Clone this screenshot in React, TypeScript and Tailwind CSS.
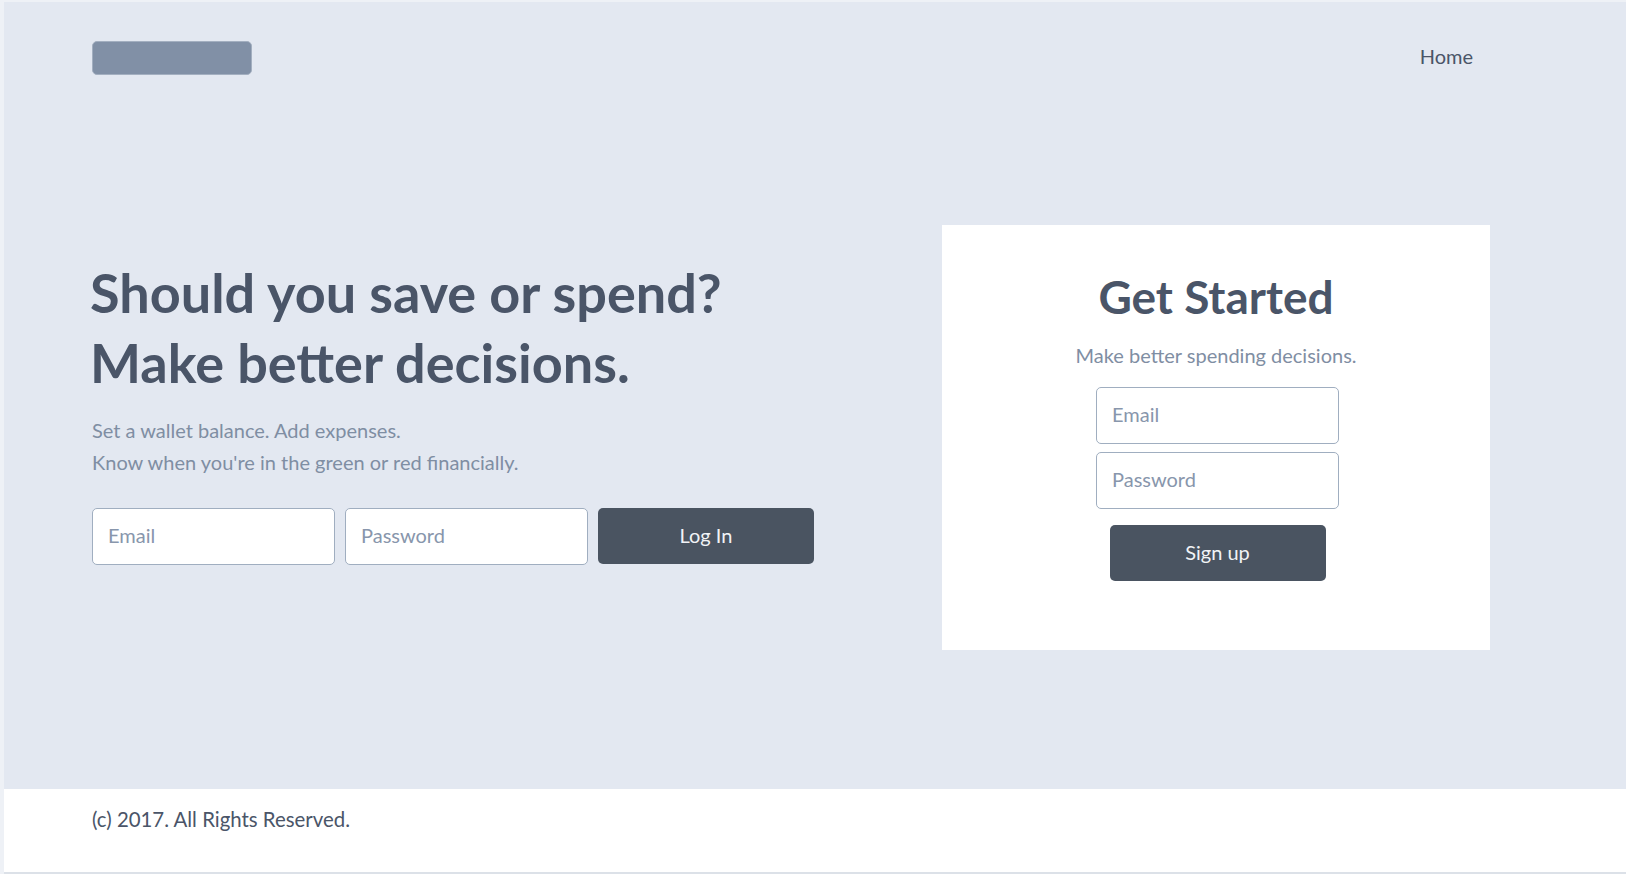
import { useState } from 'react';

const inputClass =
  'h-[57px] w-[243px] rounded-[5px] border border-[#a0aec0] bg-white px-[15px] pb-[4px] text-[20px] text-[#4a5568] outline-none placeholder:text-[#8896ac]';

const buttonClass =
  'h-[56px] w-[216px] rounded-[5px] bg-[#4a5461] pb-[3px] text-[20px] text-[#f1f3f6] cursor-pointer';

const App = () => {
  const [email, setEmail] = useState<string>('');
  const [password, setPassword] = useState<string>('');
  const [signupEmail, setSignupEmail] = useState<string>('');
  const [signupPassword, setSignupPassword] = useState<string>('');

  return (
    <div className="flex h-[874px] flex-col border-l-4 border-t-2 border-[#eef1f6] bg-[#e3e8f1] font-['Lato',sans-serif] text-[#4a5568]">
      {/* header */}
      <div className="flex items-start justify-between pl-[88px] pr-[153px] pt-[39px]">
        <div className="h-[34px] w-[160px] rounded-[5px] border border-[#a3afc0] bg-[#8190a6]"></div>
        <a href="#" className="mt-[1px] text-[20px] leading-[28px] text-[#4a5568]">
          Home
        </a>
      </div>

      {/* hero */}
      <div className="mt-[150px] flex flex-1 items-start pl-[88px]">
        <div className="mt-[33px] w-[722px]">
          <h1 className="-ml-[2px] text-[54px] font-bold leading-[70px] text-[#4a5568]">
            Should you save or spend?
            <br />
            Make better decisions.
          </h1>
          <p className="mt-[16px] text-[20px] leading-[32px] text-[#7f8ea3]">
            Set a wallet balance. Add expenses.
            <br />
            Know when you're in the green or red financially.
          </p>
          <div className="mt-[30px] flex items-start gap-[10px]">
            <input
              className={inputClass}
              placeholder="Email"
              value={email}
              onChange={(e) => setEmail(e.target.value)}
            />
            <input
              className={inputClass}
              type="password"
              placeholder="Password"
              value={password}
              onChange={(e) => setPassword(e.target.value)}
            />
            <button className={buttonClass}>Log In</button>
          </div>
        </div>

        <div className="ml-[128px] flex h-[425px] w-[548px] flex-col items-center bg-white pt-[46px]">
          <h2 className="text-[46px] font-bold leading-[52px] text-[#4a5568]">
            Get Started
          </h2>
          <p className="mt-[18px] text-[20px] leading-[28px] text-[#7f8ea3]">
            Make better spending decisions.
          </p>
          <div className="mt-[18px] flex flex-col items-center gap-[8px] pl-[3px]">
            <input
              className={inputClass}
              placeholder="Email"
              value={signupEmail}
              onChange={(e) => setSignupEmail(e.target.value)}
            />
            <input
              className={inputClass}
              type="password"
              placeholder="Password"
              value={signupPassword}
              onChange={(e) => setSignupPassword(e.target.value)}
            />
            <button className={`${buttonClass} mt-[8px]`}>Sign up</button>
          </div>
        </div>
      </div>

      {/* footer */}
      <div className="h-[85px] border-b-2 border-[#dce1e8] bg-white pl-[88px] pt-[16px]">
        <p className="text-[20.4px] leading-[28px] text-[#4a5568]">
          (c) 2017. All Rights Reserved.
        </p>
      </div>
    </div>
  );
};

export default App;
